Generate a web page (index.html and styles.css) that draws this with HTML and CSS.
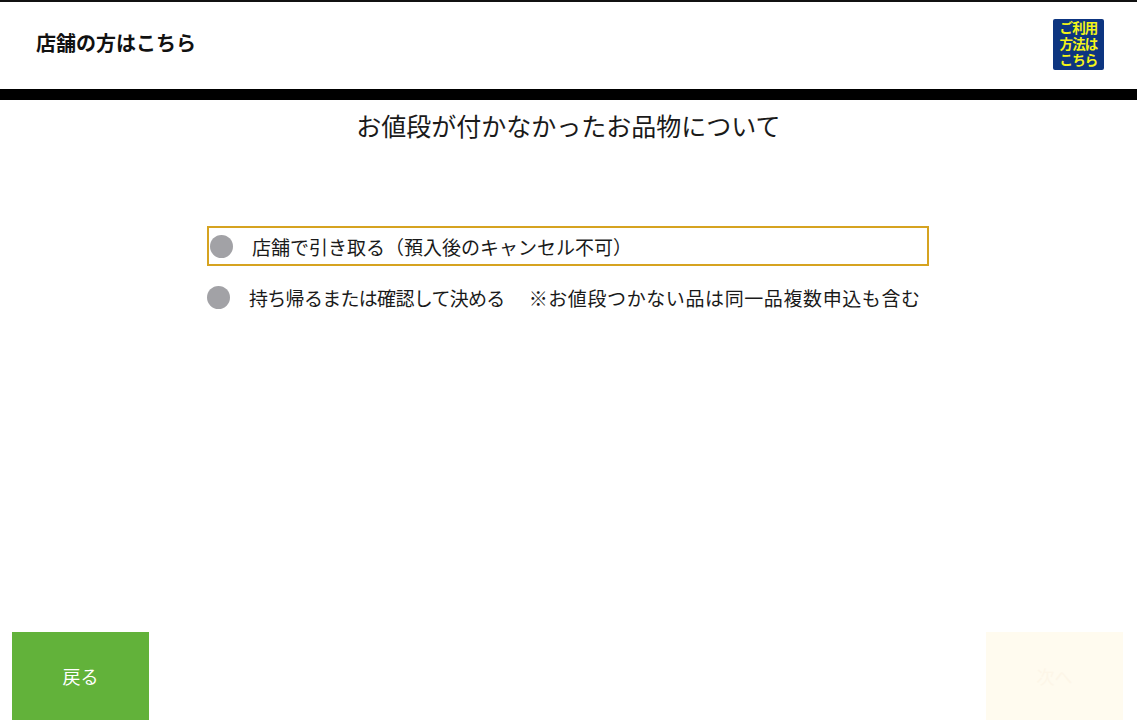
FILE: index.html
```html
<!DOCTYPE html>
<html lang="ja">
<head>
<meta charset="utf-8">
<title>お値段が付かなかったお品物について</title>
<link rel="stylesheet" href="styles.css">
</head>
<body>
<div class="page">
  <header class="header">
    <div class="header-title">店舗の方はこちら</div>
    <div class="help-logo">
      <span class="logo-line">ご利用</span>
      <span class="logo-line">方法は</span>
      <span class="logo-line">こちら</span>
    </div>
  </header>
  <main class="main">
    <h1 class="title">お値段が付かなかったお品物について</h1>
    <ul class="options">
      <li class="option selected"><span class="dot"></span><span class="label">店舗で引き取る（預入後のキャンセル不可）</span></li>
      <li class="option"><span class="dot"></span><span class="label"><span class="part-a">持ち帰るまたは確認して決める</span><span class="part-b">※お値段つかない品は同一品複数申込も含む</span></span></li>
    </ul>
  </main>
  <footer class="footer">
    <button class="btn btn-back">戻る</button>
    <button class="btn btn-next">次へ</button>
  </footer>
</div>
</body>
</html>
```
FILE: styles.css
```css
* { box-sizing: border-box; }
html, body { margin: 0; padding: 0; }
body {
  background: #fff;
  font-family: "Noto Sans CJK JP", "Noto Sans", sans-serif;
  color: #111;
}
.page {
  width: 1137px;
  height: 725px;
  display: flex;
  flex-direction: column;
}
.header {
  height: 100px;
  border-top: 2px solid #111;
  border-bottom: 11px solid #000;
  display: flex;
  align-items: center;
  justify-content: space-between;
  padding: 0 33px 6px 36px;
}
.header-title {
  font-size: 20px;
  font-weight: 700;
}
.help-logo {
  width: 51px;
  height: 51px;
  background: #0d3580;
  border-radius: 2px;
  color: #f4f418;
  font-family: "Liberation Sans", "Noto Sans CJK JP", sans-serif;
  font-weight: 700;
  font-size: 13.5px;
  display: flex;
  flex-direction: column;
  align-items: center;
  justify-content: center;
  letter-spacing: -0.8px;
  margin-top: 4px;
}
.logo-line {
  display: block;
  line-height: 16px;
}
.main {
  flex: 1;
  display: flex;
  flex-direction: column;
  align-items: center;
}
.title {
  margin: 6px 0 0;
  font-size: 25px;
  font-weight: 400;
  line-height: 38px;
  color: #1a1a1a;
}
.options {
  list-style: none;
  margin: 82px 0 0;
  padding: 0;
  width: 722px;
  margin-left: -1px;
}
.option {
  display: flex;
  align-items: center;
  height: 40px;
  margin-bottom: 11px;
}
.option.selected {
  border: 2px solid #d6a320;
  padding-left: 1px;
}
.dot {
  width: 23px;
  height: 23px;
  border-radius: 50%;
  background: #a2a2a6;
  flex: none;
}
.label {
  font-size: 19px;
  margin-left: 19px;
  color: #1a1a1a;
  white-space: nowrap;
  display: flex;
}
.part-a { letter-spacing: -0.7px; }
.part-b { margin-left: 24px; letter-spacing: 0.6px; }
.footer {
  display: flex;
  justify-content: space-between;
  padding: 0 14px 5px 12px;
}
.btn {
  width: 137px;
  height: 88px;
  border: none;
  font-family: inherit;
  font-size: 18px;
  color: #fff;
  padding: 0;
}
.btn-back { background: #62b23a; }
.btn-next { background: #fffbef; color: #fdf6e8; }
```
